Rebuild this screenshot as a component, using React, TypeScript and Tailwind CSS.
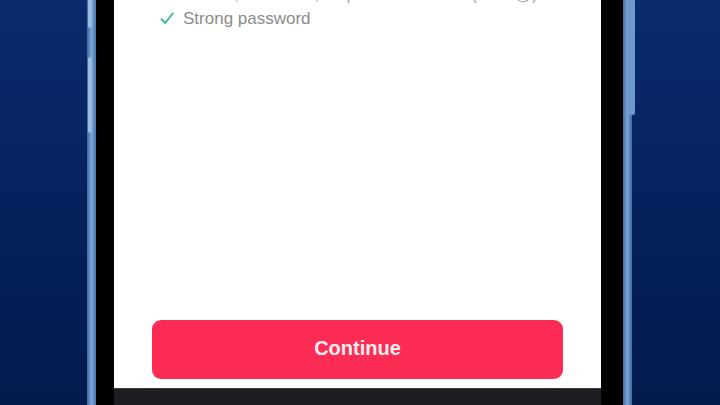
import React from 'react';

const font = { fontFamily: '"Liberation Sans", Arial, sans-serif' };

const Check: React.FC = () => (
  <svg width="14" height="13" viewBox="0 0 14 13" fill="none" className="shrink-0">
    <path d="M1.5 7.2 L5.2 11 L12.6 1.6" stroke="#45b9a7" strokeWidth="2" strokeLinecap="round" strokeLinejoin="round" />
  </svg>
);

export default function App() {
  return (
    <div
      className="flex h-[405px] w-[720px] overflow-hidden bg-gradient-to-b from-[#0b2b6c] via-[#06225e] to-[#031a4c]"
      style={font}
    >
      <div className="w-[87px] shrink-0" />

      {/* phone */}
      <div className="relative flex h-full shrink-0">
        <div className="w-[9px] bg-gradient-to-r from-[#3b69a3] via-[#7ea5d5] to-[#4775b0]" />
        <div className="w-[18px] bg-black" />

        <div className="flex w-[487px] flex-col">
          <div className="flex h-[388px] flex-col bg-white">
            {/* requirements */}
            <div className="-mt-[15px] flex flex-col gap-[5px] pl-[46px] text-[17px] text-[#8c8c8c]">
              <div className="flex h-[19px] items-center gap-[9px]">
                <Check />
                <span className="whitespace-nowrap text-[#a9a9a9]">1 letter, 1 number, 1 special character (# ? ! @)</span>
              </div>
              <div className="flex h-[19px] items-center gap-[9px]">
                <Check />
                <span>Strong password</span>
              </div>
            </div>

            <div className="mt-auto mb-[9px] px-[38px]">
              <button className="flex h-[59px] w-full items-center justify-center rounded-[9px] bg-[#fd2c55] pb-[3px] text-[20px] font-bold text-[#fdeef1]">
                Continue
              </button>
            </div>
          </div>
          <div className="flex-1 border-t border-[#3a3a40] bg-[#1d1d23]" />
        </div>

        <div className="w-[22px] bg-black" />
        <div className="w-[9px] bg-gradient-to-r from-[#4471ac] via-[#7aa2d3] to-[#3d6aa4]" />

        {/* side buttons */}
        <div className="absolute left-[1px] top-0 h-[28px] w-[4px] rounded-b-[2px] bg-[#9ab9df]" />
        <div className="absolute left-[1px] top-[57px] h-[76px] w-[4px] rounded-[2px] bg-[#9ab9df]" />
        <div className="absolute right-[-3px] top-0 h-[115px] w-[6px] rounded-b-[2px] bg-[#6f98cb]" />
      </div>

      <div className="flex-1" />
    </div>
  );
}
